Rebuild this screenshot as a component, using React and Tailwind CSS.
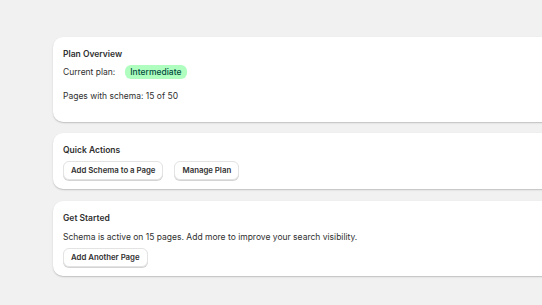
import React from 'react';

const Card = ({ children, className = '' }) => (
  <div className={`w-[540px] rounded-[10px] bg-white px-[10px] shadow-[0_1px_0_0_rgba(26,26,26,0.07),0_1px_2px_0_rgba(0,0,0,0.15)] ${className}`}>
    {children}
  </div>
);

const Button = ({ children }) => (
  <button
    type="button"
    className="h-[19px] rounded-[6px] border border-[#e3e3e3] bg-white px-[7px] text-[7.8px] font-semibold leading-none text-[#303030] shadow-[0_1px_0_0_#d4d4d4]"
  >
    {children}
  </button>
);

export default function App() {
  return (
    <div className="h-[305px] w-[542px] overflow-hidden bg-[#f1f1f1] text-[#303030]" style={{ fontFamily: 'Inter, "Noto Sans", sans-serif' }}>
      <div className="flex flex-col pl-[53px] pt-[37px]">
        <Card className="pb-[20px] pt-[11px]">
          <h2 className="text-[8.5px] font-semibold leading-[12px]">Plan Overview</h2>
          <div className="mt-[5px] flex items-center gap-[10px] text-[8.5px] leading-[12px]">
            <span>Current plan:</span>
            <span className="rounded-[6px] bg-[#affebf] px-[5px] py-[1px] text-[8.5px] font-medium leading-[12px] text-[#014b40]">Intermediate</span>
          </div>
          <p className="mt-[11px] text-[8.5px] leading-[12px]">Pages with schema: 15 of 50</p>
        </Card>

        <Card className="mt-[11px] pb-[9px] pt-[11px]">
          <h2 className="text-[8.5px] font-semibold leading-[12px]">Quick Actions</h2>
          <div className="mt-[5px] flex gap-[11px]">
            <Button>Add Schema to a Page</Button>
            <Button>Manage Plan</Button>
          </div>
        </Card>

        <Card className="mt-[12px] pb-[9px] pt-[11px]">
          <h2 className="text-[8.5px] font-semibold leading-[12px]">Get Started</h2>
          <p className="mt-[7px] text-[8.5px] leading-[12px]">Schema is active on 15 pages. Add more to improve your search visibility.</p>
          <div className="mt-[5px] flex">
            <Button>Add Another Page</Button>
          </div>
        </Card>
      </div>
    </div>
  );
}
